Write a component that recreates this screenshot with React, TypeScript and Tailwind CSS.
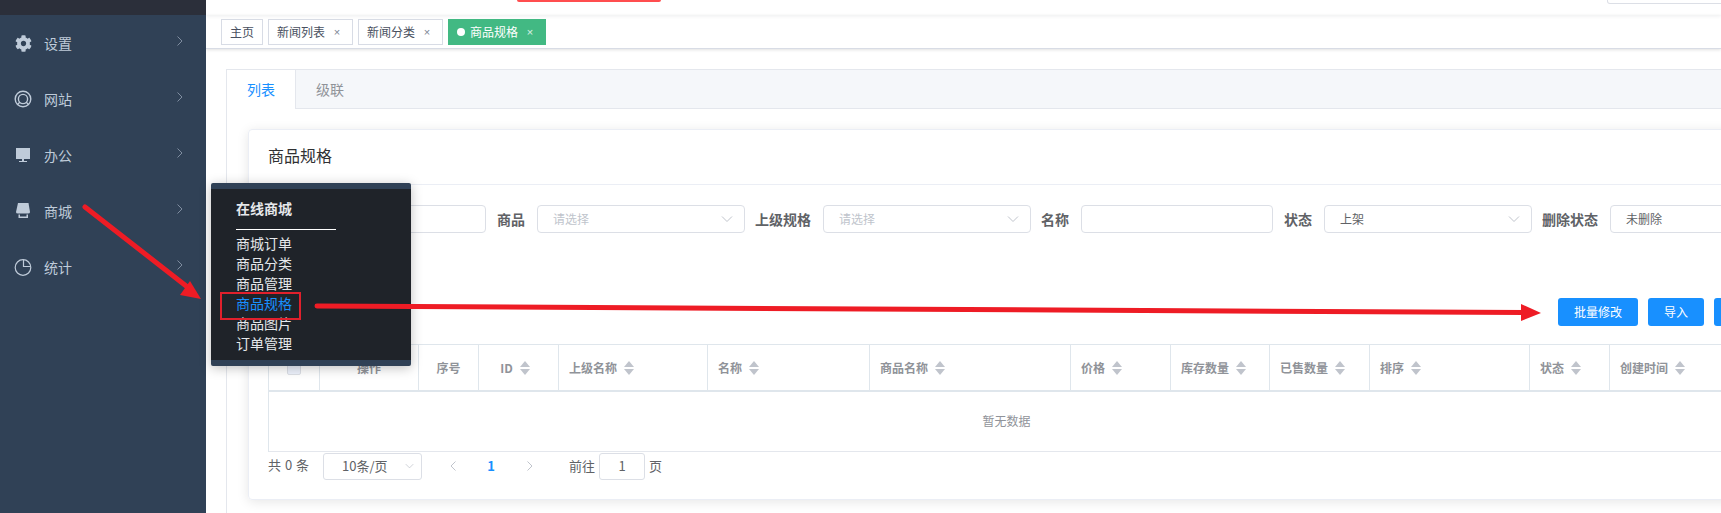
import React from 'react';
import { FaCog } from 'react-icons/fa';

const font = '[font-family:"Noto_Sans_CJK_SC","Liberation_Sans",sans-serif]';

const Chevron = ({ className = '' }: { className?: string }) => (
  <svg width="8" height="12" viewBox="0 0 8 12" fill="none" stroke="currentColor" strokeWidth="1" className={className}>
    <path d="M1.5 1.5 L6 6 L1.5 10.5" />
  </svg>
);

const ChevronDown = ({ className = '' }: { className?: string }) => (
  <svg width="12" height="8" viewBox="0 0 12 8" fill="none" stroke="currentColor" strokeWidth="1" className={className}>
    <path d="M1 1.5 L6 6.5 L11 1.5" />
  </svg>
);

const RingIcon = () => (
  <svg width="18" height="18" viewBox="0 0 18 18" fill="none" stroke="#bfcbd9" strokeWidth="1.4">
    <circle cx="9" cy="9" r="7.8" />
    <circle cx="9" cy="9" r="4.6" />
    <path d="M3.5 14.5 L6 12 M14.5 14.5 L12 12" />
  </svg>
);

const MonitorIcon = () => (
  <svg width="18" height="18" viewBox="0 0 18 18" fill="#bfcbd9">
    <rect x="2" y="2" width="14" height="11" />
    <rect x="8" y="13" width="2" height="2" />
    <rect x="5" y="15" width="8" height="1" />
  </svg>
);

const ShopIcon = () => (
  <svg width="18" height="18" viewBox="0 0 18 18" fill="#bfcbd9">
    <path d="M4 1 H14.5 L16 10 Q16 11.5 14 11.5 H4 Q2 11.5 2 10 Z" />
    <path d="M4.5 12.5 H6 V14.5 H12.5 V12.5 H14 V16 H4.5 Z" />
  </svg>
);

const PieIcon = () => (
  <svg width="18" height="18" viewBox="0 0 18 18" fill="none" stroke="#bfcbd9" strokeWidth="1.2">
    <circle cx="9" cy="9.5" r="7.8" />
    <path d="M9.5 1.7 V8.5 H16.8" />
  </svg>
);

const SortCaret = () => (
  <svg width="10" height="14" viewBox="0 0 10 14" fill="#c0c4cc" className="shrink-0">
    <path d="M5 0 L10 6 H0 Z" />
    <path d="M5 14 L0 8 H10 Z" />
  </svg>
);

const menu = [
  { label: '设置', icon: <FaCog size={17} color="#bfcbd9" /> },
  { label: '网站', icon: <RingIcon /> },
  { label: '办公', icon: <MonitorIcon /> },
  { label: '商城', icon: <ShopIcon /> },
  { label: '统计', icon: <PieIcon /> },
];

const Sidebar = () => (
  <aside className="w-[206px] shrink-0 bg-[#304156] text-[#bfcbd9]">
    <div className="h-[15px] bg-[#2b2f3a]" />
    {menu.map((m) => (
      <div key={m.label} className="flex h-[56px] items-center pl-[14px] text-[14px]">
        <span className="flex w-[18px] justify-center">{m.icon}</span>
        <span className="ml-[12px] flex-1">{m.label}</span>
        <Chevron className="mr-[22px] -mt-[4px] text-[#7f8da0]" />
      </div>
    ))}
  </aside>
);

const Tag = ({ label, closable = true, active = false }: { label: string; closable?: boolean; active?: boolean }) => (
  <div
    className={
      active
        ? 'flex h-[26px] items-center border border-[#42b983] bg-[#42b983] pl-[8px] pr-[11px] text-[12px] text-white'
        : closable
          ? 'flex h-[26px] items-center border border-[#d8dce5] bg-white pl-[8px] pr-[11px] text-[12px] text-[#495060]'
          : 'flex h-[26px] items-center border border-[#d8dce5] bg-white px-[8px] text-[12px] text-[#495060]'
    }
  >
    {active && <span className="mr-[5px] h-[8px] w-[8px] rounded-full bg-white" />}
    <span>{label}</span>
    {closable && (
      <span
        className={
          active
            ? 'ml-[8px] w-[8px] text-center text-[11px] [font-family:"Liberation_Sans"] text-white/80'
            : 'ml-[8px] w-[8px] text-center text-[11px] [font-family:"Liberation_Sans"] text-[#7b8494]'
        }
      >
        ×
      </span>
    )}
  </div>
);

const TextInput = ({ className = '', children }: { className?: string; children?: React.ReactNode }) => (
  <div className={`flex h-[28px] shrink-0 items-center rounded-[4px] border border-[#dcdfe6] bg-white pl-[15px] pr-[11px] text-[12px] ${className}`}>
    {children}
  </div>
);

const Select = ({ value, placeholder, width }: { value?: string; placeholder?: string; width: string }) => (
  <TextInput className={`justify-between ${width}`}>
    {value ? <span className="text-[#606266]">{value}</span> : <span className="text-[#c0c4cc]">{placeholder}</span>}
    <ChevronDown className="text-[#c0c4cc]" />
  </TextInput>
);

const Label = ({ text, className = '' }: { text: string; className?: string }) => (
  <span className={`shrink-0 text-[14px] font-bold leading-none text-[#606266] ${className}`}>{text}</span>
);

const FilterRow = () => (
  <div className="mt-[20px] flex items-center pl-[10px]">
    <TextInput className="w-[208px]" />
    <Label text="商品" className="ml-[11px] mr-[12px]" />
    <Select placeholder="请选择" width="w-[208px]" />
    <Label text="上级规格" className="ml-[10px] mr-[12px]" />
    <Select placeholder="请选择" width="w-[208px]" />
    <Label text="名称" className="ml-[10px] mr-[12px]" />
    <TextInput className="w-[192px]" />
    <Label text="状态" className="ml-[11px] mr-[12px]" />
    <Select value="上架" width="w-[208px]" />
    <Label text="删除状态" className="ml-[10px] mr-[12px]" />
    <Select value="未删除" width="w-[208px]" />
  </div>
);

const columns = [
  { title: '', w: 'w-[51px]', check: true },
  { title: '操作', w: 'w-[99px]', center: true },
  { title: '序号', w: 'w-[60px]', center: true },
  { title: 'ID', w: 'w-[80px] pr-[7px]', center: true, sort: true },
  { title: '上级名称', w: 'w-[149px]', sort: true },
  { title: '名称', w: 'w-[162px]', sort: true },
  { title: '商品名称', w: 'w-[201px]', sort: true },
  { title: '价格', w: 'w-[100px]', sort: true },
  { title: '库存数量', w: 'w-[99px]', sort: true },
  { title: '已售数量', w: 'w-[100px]', sort: true },
  { title: '排序', w: 'w-[160px]', sort: true },
  { title: '状态', w: 'w-[80px]', sort: true },
  { title: '创建时间', w: 'w-[160px]', sort: true },
];

const DataTable = () => (
  <div className="w-[1500px] border-l border-t border-[#dfe6ec]">
    <div className="flex h-[47px] border-b-2 border-[#dfe6ec]">
      {columns.map((c, i) => (
        <div
          key={i}
          className={`flex shrink-0 items-center gap-[7px] border-r border-[#dfe6ec] text-[12px] font-bold text-[#909399] ${c.w} ${
            c.center || c.check ? 'justify-center' : 'pl-[10px]'
          }`}
        >
          {c.check && <span className="h-[14px] w-[14px] rounded-[2px] border border-[#dcdfe6] bg-[#edf2fc]" />}
          {c.title && <span>{c.title}</span>}
          {c.sort && <SortCaret />}
        </div>
      ))}
    </div>
    <div className="flex h-[59px] w-[1475px] items-center justify-center pb-[2px] text-[12px] text-[#909399]">暂无数据</div>
    <div className="border-t border-[#e4e7ed]" />
  </div>
);

const Pagination = () => (
  <div className="flex h-[28px] items-center text-[13px] text-[#606266]">
    <span className="-mt-[2px] w-[40px] whitespace-nowrap [word-spacing:1px]">共 0 条</span>
    <div className="ml-[15px] flex h-[27px] w-[99px] items-center justify-between rounded-[3px] border border-[#dcdfe6] pl-[18px] pr-[7px]">
      <span>10条/页</span>
      <ChevronDown className="w-[9px] text-[#c0c4cc]" />
    </div>
    <span className="ml-[16px] flex w-[30px] justify-center text-[#c0c4cc]"><Chevron className="rotate-180" /></span>
    <span className="ml-[8px] w-[30px] text-center font-bold text-[#1890ff]">1</span>
    <span className="ml-[9px] flex w-[30px] justify-center text-[#c0c4cc]"><Chevron /></span>
    <span className="ml-[24px]">前往</span>
    <div className="ml-[4px] flex h-[27px] w-[46px] items-center justify-center rounded-[3px] border border-[#dcdfe6]">1</div>
    <span className="ml-[4px]">页</span>
  </div>
);

const ActionButton = ({ text, width }: { text: string; width: string }) => (
  <button className={`h-[28px] shrink-0 rounded-[3px] bg-[#1890ff] text-[12px] text-white ${width}`}>{text}</button>
);

const FloatingMenu = () => (
  <div className="absolute left-[211px] top-[183px] h-[183px] w-[200px] rounded-[2px] border-y-[6px] border-[#304156] bg-[#1f2329] pl-[25px] text-[14px] leading-[20px] text-[#e6e8eb] shadow-[0_2px_12px_rgba(0,0,0,0.25)]">
    <div className="mt-[9px] font-bold">在线商城</div>
    <div className="mb-[3px] mt-[11px] h-px w-[100px] bg-white" />
    <div>商城订单</div>
    <div>商品分类</div>
    <div>商品管理</div>
    <div className="text-[#1890ff]">商品规格</div>
    <div>商品图片</div>
    <div>订单管理</div>
    <div className="absolute left-[9px] top-[103px] h-[28px] w-[81px] border-2 border-[#e0202c]" />
  </div>
);

const Arrows = () => (
  <svg className="pointer-events-none absolute left-0 top-0" width="1721" height="513" fill="#ee1c25" stroke="none">
    <line x1="85" y1="207" x2="190" y2="289" stroke="#ee1c25" strokeWidth="5" strokeLinecap="round" />
    <polygon points="201,299 190,281 180,295" />
    <line x1="317" y1="306" x2="1525" y2="312.5" stroke="#ee1c25" strokeWidth="5" strokeLinecap="round" />
    <polygon points="1541,313 1521,304 1521,321" />
  </svg>
);

export default function App() {
  return (
    <div className={`relative flex h-[513px] w-[1721px] overflow-hidden bg-white ${font}`}>
      <Sidebar />

      <main className="min-w-0 flex-1 overflow-hidden">
        {/* top bar, only its lower edge is in the picture */}
        <div className="relative z-10 flex h-[15px] items-start shadow-[0_1px_4px_rgba(0,21,41,0.08)]">
          <div className="ml-[311px] h-[2px] w-[144px] shrink-0 rounded-b-[4px] bg-[#ff4d4f]" />
          <div className="ml-[946px] h-[4px] w-[200px] shrink-0 rounded-b-[3px] border border-t-0 border-[#dcdfe6]" />
        </div>

        {/* tags */}
        <div className="flex h-[34px] items-start gap-[5px] border-b border-[#d8dce5] pl-[15px] pt-[4px] shadow-[0_1px_3px_rgba(0,0,0,0.12)]">
          <Tag label="主页" closable={false} />
          <Tag label="新闻列表" />
          <Tag label="新闻分类" />
          <Tag label="商品规格" active />
        </div>

        {/* tabs */}
        <div className="ml-[20px] mt-[20px] h-[500px] w-[1600px] border-l border-t border-[#e4e7ed]">
          <div className="flex h-[39px] border-b border-[#e4e7ed] bg-[#f5f7fa] text-[14px]">
            <div className="-mb-px flex w-[69px] items-center justify-center border-r border-[#e4e7ed] bg-white text-[#1890ff]">列表</div>
            <div className="flex items-center pl-[20px] text-[#909399]">级联</div>
          </div>

          <div className="ml-[21px] mt-[20px] h-[371px] w-[1560px] rounded-[4px] border border-[#ebeef5] shadow-[0_2px_12px_rgba(0,0,0,0.1)]">
            <div className="flex h-[55px] items-center border-b border-[#ebeef5] pb-[5px] pl-[19px] text-[16px] text-[#303133]">商品规格</div>
            <div className="pl-[19px]">
              <FilterRow />
              <div className="ml-[1290px] mt-[65px] flex gap-[10px]">
                <ActionButton text="批量修改" width="w-[80px]" />
                <ActionButton text="导入" width="w-[56px]" />
                <ActionButton text="导出" width="w-[56px]" />
              </div>
              <div className="mt-[18px]">
                <DataTable />
              </div>
              <Pagination />
            </div>
          </div>
        </div>
      </main>

      <FloatingMenu />
      <Arrows />
    </div>
  );
}
